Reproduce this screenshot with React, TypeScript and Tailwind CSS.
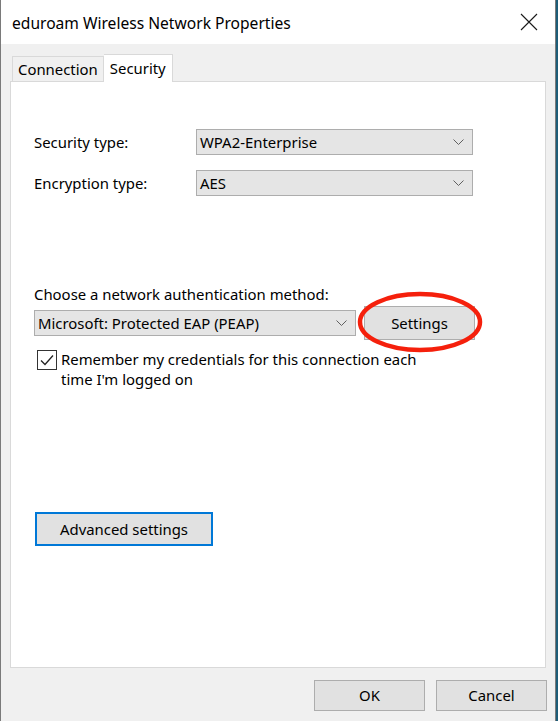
import React from "react";

const font = { fontFamily: '"Noto Sans", "Open Sans", sans-serif' };

const Chevron = () => (
    <svg width="11" height="6" viewBox="0 0 11 6" className="shrink-0">
        <path d="M0.5 0.5 L5.5 5.5 L10.5 0.5" fill="none" stroke="#606060" strokeWidth="1" />
    </svg>
);

const Select = ({ value, className }: { value: string; className: string }) => (
    <div
        className={`flex items-center justify-between h-[26px] pl-[3px] pr-[8px] bg-[#e5e5e5] border border-[#adadad] ${className}`}
    >
        <span className="leading-none">{value}</span>
        <Chevron />
    </div>
);

const Button = ({ label, className }: { label: string; className: string }) => (
    <button className={`flex items-center justify-center bg-[#e1e1e1] border border-[#adadad] ${className}`}>
        {label}
    </button>
);

export default function App() {
    return (
        <div className="w-[558px] h-[721px] bg-[#1d5d78] overflow-hidden text-black text-[14.9px]" style={font}>
            <div className="flex flex-col w-[556px] h-[721px] border-x border-[#7a7a7a] bg-[#f0f0f0]">
                {/* title bar */}
                <div className="flex items-center justify-between h-[44px] shrink-0 bg-white pt-[3px] pl-[11px] pr-[17px]">
                    <span className="text-[15.6px] leading-none">eduroam Wireless Network Properties</span>
                    <svg width="18" height="18" viewBox="0 0 18 18" className="-mt-[3px]">
                        <path d="M1 1 L17 17 M17 1 L1 17" stroke="#1a1a1a" strokeWidth="1.1" />
                    </svg>
                </div>

                {/* tabs */}
                <div className="flex items-end h-[37px] pl-[10px] shrink-0">
                    <div className="flex items-center h-[25px] ml-[1px] px-[5px] border border-b-0 border-[#d9d9d9] bg-[#f0f0f0]">
                        Connection
                    </div>
                    <div className="relative z-10 flex items-center h-[28px] -mb-px px-[6px] border border-b-0 border-l-0 border-[#d9d9d9] bg-white">
                        Security
                    </div>
                </div>

                {/* panel */}
                <div className="flex flex-col ml-[9px] w-[536px] h-[587px] shrink-0 bg-white border border-[#d9d9d9] pl-[23px]">
                    <div className="flex items-center mt-[47px]">
                        <span className="w-[162px]">Security type:</span>
                        <Select value="WPA2-Enterprise" className="w-[277px]" />
                    </div>
                    <div className="flex items-center mt-[15px]">
                        <span className="w-[162px]">Encryption type:</span>
                        <Select value="AES" className="w-[277px]" />
                    </div>

                    <div className="mt-[88px] leading-[20px]">Choose a network authentication method:</div>
                    <div className="relative flex items-center mt-[2px]">
                        <Select value="Microsoft: Protected EAP (PEAP)" className="w-[322px]" />
                        <Button label="Settings" className="ml-[8px] w-[111px] h-[34px]" />
                        <svg
                            className="absolute left-[322px] top-[-16px] pointer-events-none"
                            width="128"
                            height="64"
                            viewBox="0 0 128 64"
                        >
                            <ellipse cx="64" cy="32" rx="60" ry="28" fill="none" stroke="#f5200c" strokeWidth="4.5" />
                        </svg>
                    </div>

                    <div className="flex items-start mt-[10px] ml-[3px]">
                        <div className="flex items-center justify-center w-[20px] h-[20px] border border-[#333] bg-white shrink-0">
                            <svg width="14" height="12" viewBox="0 0 14 12">
                                <path d="M1 6.5 L5 10.5 L13 1.5" fill="none" stroke="#222" strokeWidth="1.3" />
                            </svg>
                        </div>
                        <div className="ml-[4px] leading-[20px] -mt-[1px]">
                            Remember my credentials for this connection each
                            <br />
                            time I'm logged on
                        </div>
                    </div>

                    <button className="flex items-center justify-center mt-[123px] ml-[1px] w-[178px] h-[34px] bg-[#e1e1e1] border-2 border-[#0078d7]">
                        Advanced settings
                    </button>
                </div>

                {/* footer */}
                <div className="flex justify-end gap-[11px] pr-[8px] mt-[12px]">
                    <Button label="OK" className="w-[111px] h-[31px]" />
                    <Button label="Cancel" className="w-[111px] h-[31px]" />
                </div>
            </div>
        </div>
    );
}
